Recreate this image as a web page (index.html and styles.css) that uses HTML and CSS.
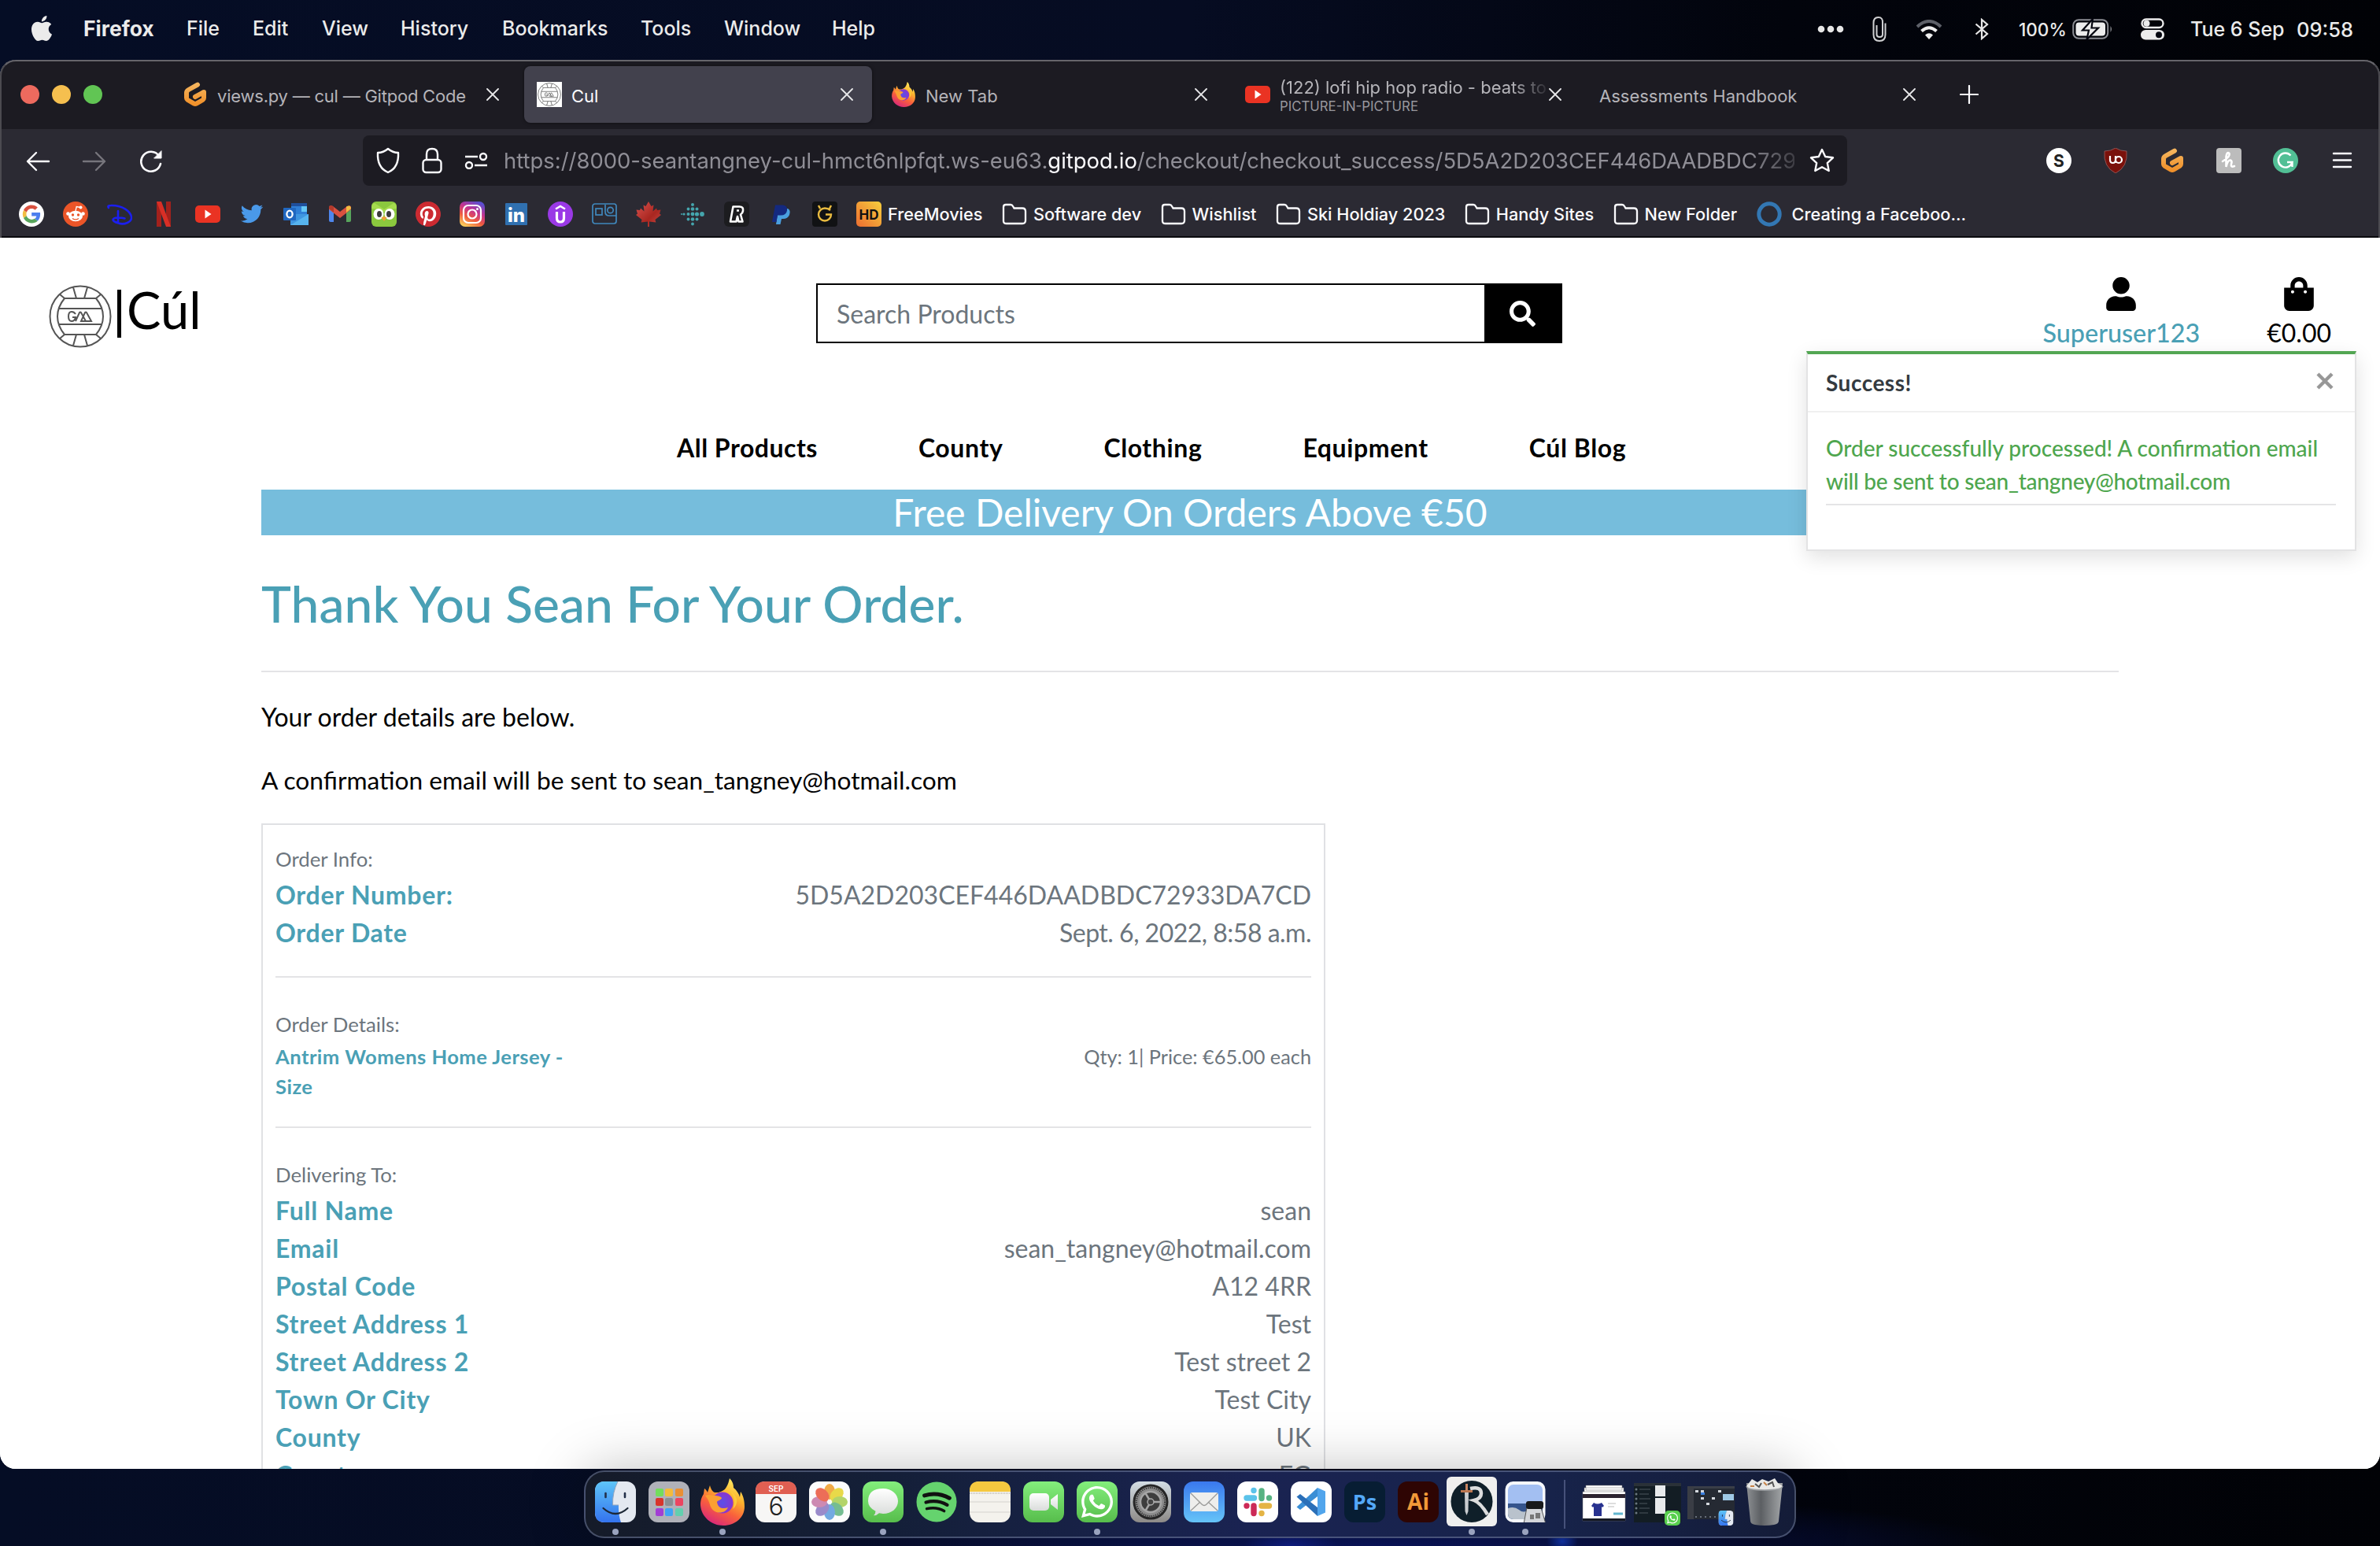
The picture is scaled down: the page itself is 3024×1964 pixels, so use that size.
FILE: index.html
```html
<!DOCTYPE html>
<html lang="en">
<head>
<meta charset="utf-8">
<title>Cul</title>
<link rel="stylesheet" href="styles.css">
</head>
<body>
<svg class="defs" aria-hidden="true">
  <defs>
    <linearGradient id="gOrange" x1="0" y1="0" x2="0" y2="1"><stop offset="0" stop-color="#f5b45c"/><stop offset="1" stop-color="#f0912b"/></linearGradient>
    <linearGradient id="gFlame" x1=".8" y1="0" x2=".3" y2="1"><stop offset="0" stop-color="#fff36b"/><stop offset=".35" stop-color="#fdb32d"/><stop offset=".65" stop-color="#f9603c"/><stop offset="1" stop-color="#d8267c"/></linearGradient>
    <radialGradient id="gGlobe"><stop offset="0" stop-color="#5a50e8"/><stop offset="1" stop-color="#8a35cf"/></radialGradient>
    <linearGradient id="gInsta" x1=".2" y1="1" x2=".7" y2="0"><stop offset="0" stop-color="#fbd45c"/><stop offset=".35" stop-color="#ee5a3e"/><stop offset=".65" stop-color="#c5338f"/><stop offset="1" stop-color="#5b4ed1"/></linearGradient>
    <linearGradient id="gLeaf" x1="0" y1="0" x2="1" y2="1"><stop offset="0" stop-color="#d9534f"/><stop offset=".6" stop-color="#a92620"/><stop offset="1" stop-color="#c74a45"/></linearGradient>
    <linearGradient id="gHd" x1="1" y1="0" x2="0" y2="1"><stop offset="0" stop-color="#f7cf3d"/><stop offset="1" stop-color="#ec6d31"/></linearGradient>
    <linearGradient id="gGreen" x1="0" y1="0" x2="0" y2="1"><stop offset="0" stop-color="#83ee7c"/><stop offset="1" stop-color="#57bd4c"/></linearGradient>
    <linearGradient id="gBlue" x1="0" y1="0" x2="0" y2="1"><stop offset="0" stop-color="#5ec5f8"/><stop offset="1" stop-color="#3473ee"/></linearGradient>
    <linearGradient id="gMail" x1="0" y1="0" x2="0" y2="1"><stop offset="0" stop-color="#3a78ee"/><stop offset="1" stop-color="#66c4f8"/></linearGradient>
    <linearGradient id="gGrey" x1="0" y1="0" x2="0" y2="1"><stop offset="0" stop-color="#d3dde4"/><stop offset="1" stop-color="#8d8a87"/></linearGradient>
    <linearGradient id="gWhite" x1="0" y1="0" x2="0" y2="1"><stop offset="0" stop-color="#fff"/><stop offset="1" stop-color="#d9dcda"/></linearGradient>
    <linearGradient id="gBin" x1="0" y1="0" x2="1" y2="0"><stop offset="0" stop-color="#8d9093"/><stop offset=".4" stop-color="#5c5f63"/><stop offset="1" stop-color="#a3a6a8"/></linearGradient>
    <symbol id="gitpod" viewBox="0 0 32 32"><path d="M19 3.600 L7.600 10 Q5 11.500 5 14 V20.500 Q5 22 6.500 23 L14.500 27.600 Q16 28.400 17.500 27.600 L25.500 23 Q27 22 27 20.500 V13 L16 19" fill="none" stroke="url(#gOrange)" stroke-width="6" stroke-linejoin="round" stroke-linecap="round"/></symbol>
    <symbol id="firefox" viewBox="0 0 56 60"><path d="M37 0c4 4 5 8 5 12 4 3 7 8 8 12l1-7c4 6 5 13 5 19 0 14-12 24-27 24S1 49 0 34c0-7 2-11 4-14l1-7c2 1 3 3 4 5l3-9c1 4 3 8 6 9h5c5-2 8-3 10-7 2-3 3-7 4-11z" fill="url(#gFlame)"/><circle cx="28" cy="31" r="13.500" fill="url(#gGlobe)"/><path d="M6 22c5-2 9 0 12 0 4 0 8 1 9 3-1 3-5 3-6 5 1 9 9 9 14 7-4 9-17 8-21 1-3-5-2-9-8-16z" fill="#fba032"/><path d="M36 15c8 6 8 18 5 24 4-3 6-8 5-13-2-6-6-9-10-11z" fill="#fdc93b"/></symbol>
    <symbol id="youtube" viewBox="0 0 32 32"><rect y="5" width="32" height="22" rx="5" fill="#ea3323"/><path d="M12.500 10.500v11l8-5.500z" fill="#fff"/></symbol>
    <symbol id="close" viewBox="0 0 16 16"><path d="M1 1l14 14M15 1L1 15" stroke="#e8e8ea" stroke-width="1.800" stroke-linecap="round"/></symbol>
    <symbol id="folder" viewBox="0 0 32 32"><path d="M2 25V7q0-3 3-3h6q2 0 3 2l1.500 2.500H26q4 0 4 4V24q0 4-4 4H6q-4 0-4-3z" fill="none" stroke="#fbfbfe" stroke-width="2.300"/></symbol>
    <symbol id="ball" viewBox="0 0 80 80"><g fill="none" stroke="#555" stroke-width="2"><circle cx="40" cy="40" r="38.500"/><path d="M20 17h40Q69 28 69 40T60 63H20Q11 52 11 40T20 17zM13 30h54M13 50h54M20 17L14 12M35 17L31 3M45 17L49 3M60 17l6-5M20 63l-6 5M35 63l-4 14M45 63l4 14M60 63l6 5"/></g><path d="M34 37q-2-3-5-3-4 0-4 6t4 6q4 0 5-5h-4M34 46l5-11q1-1 2 0l6 11h-6l5-11q1-1 2 0l6 11h-9" fill="none" stroke="#555" stroke-width="2"/></symbol>
    <symbol id="whatsapp" viewBox="0 0 448 512"><path d="M380.900 97.100C339 55.100 283.200 32 223.900 32c-122.400 0-222 99.600-222 222 0 39.100 10.200 77.300 29.600 111L0 480l117.700-30.900c32.400 17.700 68.900 27 106.100 27h.1c122.300 0 224.100-99.600 224.100-222 0-59.300-25.200-115-67.100-157zm-157 341.600c-33.200 0-65.700-8.900-94-25.700l-6.700-4-69.800 18.300L72 359.200l-4.400-7c-18.500-29.400-28.200-63.300-28.200-98.200 0-101.700 82.800-184.500 184.600-184.500 49.300 0 95.600 19.200 130.400 54.100 34.800 34.900 56.200 81.200 56.100 130.500 0 101.800-84.900 184.600-186.600 184.600zm101.200-138.200c-5.500-2.800-32.800-16.200-37.900-18-5.100-1.900-8.800-2.800-12.500 2.800-3.700 5.600-14.300 18-17.600 21.800-3.200 3.700-6.500 4.200-12 1.400-32.600-16.300-54-29.100-75.500-66-5.700-9.800 5.700-9.100 16.300-30.300 1.800-3.700.9-6.900-.5-9.700-1.400-2.800-12.500-30.100-17.100-41.200-4.500-10.800-9.100-9.300-12.500-9.500-3.200-.2-6.900-.2-10.600-.2-3.700 0-9.700 1.400-14.800 6.900-5.100 5.600-19.400 19-19.400 46.300 0 27.300 19.900 53.700 22.600 57.400 2.800 3.700 39.100 59.700 94.800 83.800 35.200 15.200 49 16.500 66.600 13.900 10.700-1.600 32.800-13.400 37.400-26.400 4.600-13 4.600-24.100 3.200-26.400-1.300-2.500-5-3.900-10.500-6.600z" fill="#fff"/></symbol>
    <symbol id="finder" viewBox="0 0 52 52"><rect width="52" height="52" rx="12" fill="#e4e9f1"/><path d="M12 0H29Q22 14 22.500 30H30Q29.500 42 33 52H12Q0 52 0 40V12Q0 0 12 0z" fill="url(#gBlue)"/><path d="M29 0Q22 14 22.500 30H30" fill="none" stroke="#93a5bd" stroke-width="1"/><path d="M13.500 15v5M38 15v5" stroke="#22304a" stroke-width="2.600" stroke-linecap="round"/><path d="M10.500 34Q26 48 41.500 34" fill="none" stroke="#1d2836" stroke-width="2.200" stroke-linecap="round"/></symbol>
  </defs>
</svg>

<header class="menubar">
  <svg class="apple" viewBox="2 0 20 24"><path fill="#ebebeb" d="M12.152 6.896c-.948 0-2.415-1.078-3.960-1.040-2.040.027-3.910 1.183-4.961 3.014-2.117 3.675-.546 9.103 1.519 12.090 1.013 1.454 2.208 3.090 3.792 3.039 1.520-.065 2.090-.987 3.935-.987 1.831 0 2.350.987 3.960.948 1.637-.026 2.676-1.480 3.676-2.948 1.156-1.688 1.636-3.325 1.662-3.415-.039-.013-3.182-1.221-3.220-4.857-.026-3.040 2.480-4.494 2.597-4.559-1.429-2.090-3.623-2.324-4.390-2.376-2-.156-3.675 1.090-4.610 1.090zM15.530 3.830c.843-1.012 1.400-2.427 1.245-3.830-1.207.052-2.662.805-3.532 1.818-.78.896-1.454 2.338-1.273 3.714 1.338.104 2.715-.688 3.559-1.701"/></svg>
  <nav class="menus"><b>Firefox</b><span>File</span><span>Edit</span><span>View</span><span>History</span><span>Bookmarks</span><span>Tools</span><span>Window</span><span>Help</span></nav>
  <div class="status">
    <svg width="34" height="10" viewBox="0 0 34 10" fill="#e6e6e6"><circle cx="5" cy="5" r="4.300"/><circle cx="17" cy="5" r="4.300"/><circle cx="29" cy="5" r="4.300"/></svg>
    <svg width="18" height="32" viewBox="0 0 18 32"><path d="M1.500 10v13q0 8 7.500 8t7.500-8V8.500M1.500 12V8Q1.500 1 7.500 1T13 8v15q0 3-3.700 3T5.500 23V11" fill="none" stroke="#cfd0d2" stroke-width="2"/></svg>
    <svg width="34" height="25" viewBox="0 0 34 25" fill="none" stroke-width="4"><path d="M2 9Q17-5 32 9" stroke="#5d6068"/><path d="M7.500 14.500Q17 6 26.500 14.500" stroke="#eee"/><path d="M12 19.500Q17 15 22 19.500L17 25z" fill="#eee"/></svg>
    <svg width="18" height="28" viewBox="0 0 18 28"><path d="M1.500 7.500L16 20 9 26V2l7 6L1.500 20.500" fill="none" stroke="#e8e8e8" stroke-width="2.200"/></svg>
    <span class="pct">100%</span>
    <svg width="52" height="26" viewBox="0 0 52 26"><rect x="1.200" y="1.200" width="44" height="23.600" rx="7" fill="none" stroke="#8a8c92" stroke-width="2"/><rect x="4.500" y="4.500" width="37.500" height="17" rx="4" fill="#ececec"/><path d="M48.500 9q3 4 0 8z" fill="#8a8c92"/><path d="M26 0L13 14.500h8L18.500 26 33 11.500h-8.500z" fill="#ececec" stroke="#04060f" stroke-width="2.200"/></svg>
    <svg width="30" height="28" viewBox="0 0 30 28"><rect x="1.500" y="1.500" width="27" height="10.500" rx="5.200" fill="none" stroke="#ececec" stroke-width="2.400"/><circle cx="7.500" cy="6.700" r="4" fill="#ececec"/><rect x="0" y="15" width="30" height="12.500" rx="6.200" fill="#ececec"/><circle cx="23" cy="21.200" r="4" fill="#04060f"/></svg>
    <span class="date">Tue 6 Sep</span><span class="time">09:58</span>
  </div>
</header>

<main class="window">
  <div class="tabstrip">
    <div class="lights"><i class="red"></i><i class="amber"></i><i class="green"></i></div>
    <div class="tab"><svg class="fav"><use href="#gitpod"/></svg><span class="label snug">views.py — cul — Gitpod Code</span><svg class="x"><use href="#close"/></svg></div>
    <div class="tab active"><span class="fav white"><svg width="30" height="30"><use href="#ball"/></svg></span><span class="label">Cul</span><svg class="x"><use href="#close"/></svg></div>
    <div class="tab"><svg class="fav"><use href="#firefox"/></svg><span class="label">New Tab</span><svg class="x"><use href="#close"/></svg></div>
    <div class="tab"><svg class="fav"><use href="#youtube"/></svg><span class="label two"><span class="fade">(122) lofi hip hop radio - beats to</span><small>PICTURE-IN-PICTURE</small></span><svg class="x"><use href="#close"/></svg></div>
    <div class="tab"><span class="label">Assessments Handbook</span><svg class="x"><use href="#close"/></svg></div>
    <svg class="plus" viewBox="0 0 24 24"><path d="M12 1v22M1 12h22" stroke="#fbfbfe" stroke-width="2.200" stroke-linecap="round"/></svg>
  </div>

  <div class="toolbar">
    <div class="nav-buttons">
      <svg width="32" height="28" viewBox="0 0 32 28" fill="none" stroke="#fbfbfe" stroke-width="2.400" stroke-linecap="round" stroke-linejoin="round"><path d="M30 14H3M14 3L3 14l11 11"/></svg>
      <svg width="32" height="28" viewBox="0 0 32 28" fill="none" stroke="#76757c" stroke-width="2.400" stroke-linecap="round" stroke-linejoin="round"><path d="M2 14h27M18 3l11 11-11 11"/></svg>
      <svg width="32" height="30" viewBox="0 0 32 30" fill="none" stroke="#fbfbfe" stroke-width="2.600" stroke-linecap="round"><path d="M28 18A12.500 12.500 0 1 1 26 8"/><path d="M29 2v9h-9z" fill="#fbfbfe" stroke-width="1"/></svg>
    </div>
    <div class="urlbar">
      <svg width="32" height="34" viewBox="0 0 32 34" fill="none" stroke="#fbfbfe" stroke-width="2.400" stroke-linejoin="round"><path d="M16 2q6 5 13 5 1 19-13 25Q2 26 3 7q7 0 13-5z"/></svg>
      <svg width="26" height="34" viewBox="0 0 26 34" fill="none" stroke="#fbfbfe" stroke-width="2.400"><rect x="1.500" y="16" width="23" height="16" rx="4"/><path d="M6 16V9q0-7 7-7t7 7v7"/></svg>
      <svg width="30" height="22" viewBox="0 0 30 22" fill="none" stroke="#fbfbfe" stroke-width="2.400"><path d="M1 6h16M13 17h16"/><circle cx="24" cy="6" r="4"/><circle cx="6" cy="17" r="4"/></svg>
      <span class="url">https://8000-seantangney-cul-hmct6nlpfqt.ws-eu63.<b>gitpod.io</b>/checkout/checkout_success/5D5A2D203CEF446DAADBDC729</span>
      <svg class="star" width="32" height="32" viewBox="0 0 32 32"><path d="M16 2l4.200 9 9.800 1.300-7.200 6.800 1.900 9.900L16 24.200 7.300 29l1.900-9.900L2 12.300 11.800 11z" fill="none" stroke="#fbfbfe" stroke-width="2.400" stroke-linejoin="round"/></svg>
    </div>
    <div class="extensions">
      <svg viewBox="0 0 32 32"><circle cx="16" cy="16" r="16" fill="#fff"/><text x="16" y="23.500" text-anchor="middle" font-family="Inter" font-weight="700" font-size="21" fill="#222">S</text></svg>
      <svg viewBox="0 0 32 32"><path d="M16 0q6 4 14 4 2 20-14 28Q0 24 2 4q8 0 14-4z" fill="#7a110b" stroke="#9b6262" stroke-width=".8"/><path d="M9 10v5q0 4 3.500 4t3.500-4v-5M16 10v9M16 15a4 4 0 1 0 8 0 4 4 0 1 0-8 0" fill="none" stroke="#fff" stroke-width="2.200"/></svg>
      <svg><use href="#gitpod"/></svg>
      <svg viewBox="0 0 32 32"><rect width="32" height="32" rx="4" fill="#bcbcbc"/><path d="M8 17Q18 11 16.500 7q-3-3-4 4v13q2-9 5.500-8.500 2.500 1 1 5-1 4.500 4 2.500" fill="none" stroke="#fff" stroke-width="2.600" stroke-linecap="round"/></svg>
      <svg viewBox="0 0 32 32"><circle cx="16" cy="16" r="16" fill="#52bf95"/><path d="M22.500 9.500A9 9 0 1 0 24.500 18H18M24.500 18v6" fill="none" stroke="#fff" stroke-width="2.400"/></svg>
      <svg viewBox="0 0 32 32"><path d="M5 7h22M5 15.500h22M5 24h22" stroke="#fbfbfe" stroke-width="2.400" stroke-linecap="round"/></svg>
    </div>
  </div>

  <div class="bookmarks">
    <svg viewBox="0 0 32 32"><circle cx="16" cy="16" r="16" fill="#fff"/><g transform="translate(4.800 4.600) scale(.475)"><path fill="#d95140" d="M24 9.500c3.540 0 6.710 1.220 9.210 3.600l6.850-6.850C35.900 2.380 30.470 0 24 0 14.620 0 6.510 5.380 2.560 13.220l7.980 6.190C12.430 13.720 17.740 9.500 24 9.500z"/><path fill="#4c7fee" d="M46.980 24.550c0-1.570-.15-3.090-.38-4.550H24v9.020h12.940c-.58 2.960-2.260 5.480-4.780 7.180l7.730 6c4.510-4.180 7.090-10.360 7.090-17.650z"/><path fill="#f2bd42" d="M10.530 28.590c-.48-1.450-.76-2.990-.76-4.590s.27-3.140.76-4.590l-7.980-6.190C.92 16.460 0 20.120 0 24c0 3.880.92 7.540 2.560 10.780l7.970-6.190z"/><path fill="#58a55c" d="M24 48c6.480 0 11.930-2.130 15.890-5.810l-7.730-6c-2.150 1.450-4.920 2.300-8.160 2.300-6.260 0-11.570-4.220-13.470-9.910l-7.980 6.190C6.510 42.620 14.620 48 24 48z"/></g></svg>
    <svg viewBox="0 0 32 32"><circle cx="16" cy="16" r="16" fill="#eb5528"/><g fill="#fff"><ellipse cx="16" cy="18.500" rx="9" ry="6.800"/><circle cx="6.500" cy="15.500" r="2.300"/><circle cx="25.500" cy="15.500" r="2.300"/><circle cx="22.500" cy="7.500" r="2"/></g><path d="M16 12l1.200-5.500 5 1" fill="none" stroke="#fff" stroke-width="1.300"/><circle cx="12.500" cy="17" r="1.700" fill="#eb5528"/><circle cx="19.500" cy="17" r="1.700" fill="#eb5528"/><path d="M12 21.500q4 2.800 8 0" fill="none" stroke="#eb5528" stroke-width="1.300"/></svg>
    <svg viewBox="0 0 32 32"><path d="M2 8Q0 5 5 5C20 4.500 30 13 31 20c.5 6-9 10-16.500 7.500-4-1-7-3-7-4.500 1-3 9-3 15-1.500M14 12v15" fill="none" stroke="#1b1ff0" stroke-width="2.600" stroke-linecap="round"/></svg>
    <svg viewBox="0 0 32 32"><path d="M7 0h6v32H7z" fill="#a3211c"/><path d="M19 0h6v32h-6z" fill="#a3211c"/><path d="M7 0h6l12 32h-6z" fill="#d92f26"/></svg>
    <svg><use href="#youtube"/></svg>
    <svg viewBox="-1.500 -1.200 27 27"><path fill="#4a99e9" d="M23.953 4.570a10 10 0 01-2.825.775 4.958 4.958 0 002.163-2.723c-.951.555-2.005.959-3.127 1.184a4.920 4.920 0 00-8.384 4.482C7.690 8.095 4.067 6.130 1.640 3.162a4.822 4.822 0 00-.666 2.475c0 1.710.87 3.213 2.188 4.096a4.904 4.904 0 01-2.228-.616v.06a4.923 4.923 0 003.946 4.827 4.996 4.996 0 01-2.212.085 4.936 4.936 0 004.604 3.417 9.867 9.867 0 01-6.102 2.105c-.39 0-.779-.023-1.170-.067a13.995 13.995 0 007.557 2.209c9.053 0 13.998-7.496 13.998-13.985 0-.21 0-.42-.015-.63A9.935 9.935 0 0024 4.590z"/></svg>
    <svg viewBox="0 0 32 32"><path d="M10 2h20v15H10z" fill="#2f7fd6"/><path d="M10 2h20v4H10z" fill="#1f4f9c"/><path d="M23 6h7v7h-7z" fill="#65c7f5"/><path d="M9 16h23v14H9z" fill="#3f96e0"/><path d="M9 30L32 16v14z" fill="#57b4ee"/><rect y="8" width="16" height="16" rx="1" fill="#2067c0"/><ellipse cx="8" cy="16" rx="3.600" ry="4.400" fill="none" stroke="#fff" stroke-width="2.300"/></svg>
    <svg viewBox="0 0 32 32"><path d="M2 8h6v18H4q-2 0-2-2z" fill="#4f86ec"/><path d="M24 8h6v16q0 2-2 2h-4z" fill="#58a55c"/><path d="M2 8q0-4 5-2l9 7 9-7q5-2 5 2v2l-14 11L2 10z" fill="#d95140"/><path d="M24 6.500q6-3 6 2.500l-6 5z" fill="#f2bd42"/><path d="M2 8q0-5 6-1.500V14l-6-5z" fill="#b33a2c"/></svg>
    <svg viewBox="0 0 32 32"><rect width="32" height="32" rx="6" fill="#8bc83e"/><path d="M0 9Q0 2 4 2l12 8L28 2q4 0 4 7l-9 1-7 3-7-3z" fill="#a5db4e"/><ellipse cx="9" cy="16" rx="6.500" ry="7" fill="#fff"/><ellipse cx="23" cy="16" rx="6.500" ry="7" fill="#fff"/><ellipse cx="10" cy="16" rx="3" ry="4" fill="#3c3c3c"/><ellipse cx="22" cy="16" rx="3" ry="4" fill="#3c3c3c"/><path d="M12.500 20.500q3.500-3 7 0L16 25z" fill="#efa037"/></svg>
    <svg viewBox="0 0 24 24"><circle cx="12" cy="12" r="11.500" fill="#fff"/><path fill="#cc2a31" d="M12.017 0C5.396 0 .029 5.367.029 11.987c0 5.079 3.158 9.417 7.618 11.162-.105-.949-.199-2.403.041-3.439.219-.937 1.406-5.957 1.406-5.957s-.359-.72-.359-1.781c0-1.663.967-2.911 2.168-2.911 1.024 0 1.518.769 1.518 1.688 0 1.029-.653 2.567-.992 3.992-.285 1.193.6 2.165 1.775 2.165 2.128 0 3.768-2.245 3.768-5.487 0-2.861-2.063-4.869-5.008-4.869-3.410 0-5.409 2.562-5.409 5.199 0 1.033.394 2.143.889 2.741.099.12.112.225.085.345-.09.375-.293 1.199-.334 1.363-.053.225-.172.271-.401.165-1.495-.69-2.433-2.878-2.433-4.646 0-3.776 2.748-7.252 7.920-7.252 4.158 0 7.392 2.967 7.392 6.923 0 4.135-2.607 7.462-6.233 7.462-1.214 0-2.354-.629-2.758-1.379l-.749 2.848c-.269 1.045-1.004 2.352-1.498 3.146 1.123.345 2.306.535 3.550.535 6.607 0 11.985-5.365 11.985-11.987C23.970 5.390 18.592.026 11.985.026L12.017 0z"/></svg>
    <svg viewBox="0 0 32 32"><rect width="32" height="32" rx="7" fill="url(#gInsta)"/><g fill="none" stroke="#fff" stroke-width="2.200"><rect x="5" y="5" width="22" height="22" rx="6"/><circle cx="16" cy="16" r="5.500"/></g><circle cx="22.500" cy="9.500" r="1.500" fill="#fff"/></svg>
    <svg viewBox="0 0 32 32"><rect x="2" y="2" width="28" height="28" rx="1" fill="#3070b0"/><text x="16" y="26" text-anchor="middle" font-family="Inter" font-weight="800" font-size="24" fill="#fff">in</text></svg>
    <svg viewBox="0 0 32 32"><circle cx="16" cy="16" r="16" fill="#9a39e6"/><path d="M11.500 13v8q0 5 4.500 5t4.500-5v-8" fill="none" stroke="#fff" stroke-width="3.200"/><path d="M10 9.500l6-3.500 6 3.500" fill="none" stroke="#fff" stroke-width="2.500"/></svg>
    <svg viewBox="0 0 32 32" fill="none" stroke="#4088bd" stroke-width="1.700"><rect x="1" y="3" width="30" height="25" rx="3"/><path d="M17 4v9q0 5 5 5h9"/><rect x="5" y="9" width="8" height="8"/><circle cx="23.500" cy="11" r="3.700"/></svg>
    <svg viewBox="0 0 32 32"><path d="M16 0l3.500 6 3-1.500-1 8 4.500-4 1 2.500 4.500-.5-1.500 5 2 1.500-7.500 6 .8 3.500-8.300-1V32h-2v-6.500l-8.300 1 .8-3.500L0 17l2-1.500-1.500-5 4.500.5 1-2.500 4.500 4-1-8 3 1.500z" fill="url(#gLeaf)"/></svg>
    <svg viewBox="0 0 32 32" fill="#45a5ad"><circle cx="16" cy="4" r="2"/><circle cx="10.500" cy="9.500" r="1.900"/><circle cx="16" cy="9.500" r="2.300"/><circle cx="21.500" cy="9.500" r="2"/><circle cx="5" cy="16" r="1.600"/><circle cx="10.500" cy="16" r="2"/><circle cx="16" cy="16" r="2.400"/><circle cx="21.500" cy="16" r="2.600"/><circle cx="28" cy="16" r="2.900"/><circle cx="10.500" cy="22.500" r="1.900"/><circle cx="16" cy="22.500" r="2.300"/><circle cx="21.500" cy="22.500" r="2"/><circle cx="16" cy="28.500" r="1.900"/><circle cx="2" cy="16" r="1"/></svg>
    <svg viewBox="0 0 32 32"><rect width="32" height="32" rx="6" fill="#1c1c1f"/><path d="M11.500 6.500h8q5.500 0 4.500 5.500-.5 3-3 4.500l2.500 9h-5l-1.500-6.500-1.500 6.500H8z" fill="#1c1c1f" stroke="#fff" stroke-width="2.600" stroke-linejoin="round"/><path d="M16 11.500h3" stroke="#fff" stroke-width="2.500"/></svg>
    <svg viewBox="0 0 32 32"><path d="M13 9h12q4 2 2 8-2 5-8 5h-2l-1.500 7H10z" fill="#4a9fdf"/><path d="M9 4.500h10q6 1 5 7-1 6-8 6h-4l-1.500 8.500H5z" fill="#14297f"/></svg>
    <svg viewBox="0 0 32 32"><rect width="32" height="32" rx="4" fill="#111214"/><path d="M23 11Q20 8.500 16 8.500a8 8 0 1 0 8 8h-7M10 9L8 5M22 9l2-4" fill="none" stroke="#e9bb40" stroke-width="2.400"/></svg>
    <a class="bm hd"><svg viewBox="0 0 32 32"><rect width="32" height="32" rx="5" fill="url(#gHd)"/><text x="16" y="22.500" text-anchor="middle" font-family="Inter" font-weight="700" font-size="17" fill="#111">HD</text></svg>FreeMovies</a>
    <a class="bm"><svg><use href="#folder"/></svg>Software dev</a>
    <a class="bm"><svg><use href="#folder"/></svg>Wishlist</a>
    <a class="bm"><svg><use href="#folder"/></svg>Ski Holdiay 2023</a>
    <a class="bm"><svg><use href="#folder"/></svg>Handy Sites</a>
    <a class="bm"><svg><use href="#folder"/></svg>New Folder</a>
    <a class="bm fb"><svg viewBox="0 0 32 32"><circle cx="16" cy="16" r="13.200" fill="none" stroke="#3377b3" stroke-width="5"/></svg>Creating a Faceboo...</a>
  </div>

  <section class="page">
    <div class="top">
      <a class="brand"><svg class="crest"><use href="#ball"/></svg><i class="bar"></i><span>Cúl</span></a>
      <form class="search"><span class="field">Search Products</span><span class="go"><svg width="33" height="33" viewBox="0 0 512 512"><path fill="#fff" d="M505 442.700L405.300 343c-4.500-4.500-10.600-7-17-7H372c27.600-35.300 44-79.700 44-128C416 93.100 322.900 0 208 0S0 93.100 0 208s93.100 208 208 208c48.300 0 92.700-16.400 128-44v16.300c0 6.400 2.500 12.500 7 17l99.700 99.700c9.400 9.400 24.600 9.400 33.900 0l28.300-28.300c9.400-9.400 9.400-24.600.1-34zM208 336c-70.700 0-128-57.200-128-128 0-70.700 57.200-128 128-128 70.700 0 128 57.200 128 128 0 70.700-57.200 128-128 128z"/></svg></span></form>
      <div class="account">
        <a class="user"><svg width="38" height="43" viewBox="0 0 448 512"><path d="M224 256c70.700 0 128-57.300 128-128S294.700 0 224 0 96 57.300 96 128s57.300 128 128 128zm89.600 32h-16.700c-22.200 10.200-46.900 16-72.900 16s-50.600-5.800-72.900-16h-16.700C60.200 288 0 348.200 0 422.400V464c0 26.500 21.500 48 48 48h352c26.500 0 48-21.500 48-48v-41.600c0-74.200-60.200-134.400-134.400-134.400z"/></svg><span>Superuser123</span></a>
        <a><svg width="38" height="43" viewBox="0 0 448 512"><path d="M352 160v-32C352 57.420 294.579 0 224 0 153.420 0 96 57.420 96 128v32H0v272c0 44.183 35.817 80 80 80h288c44.183 0 80-35.817 80-80V160h-96zm-192-32c0-35.290 28.710-64 64-64s64 28.710 64 64v32H160v-32zm160 120c-13.255 0-24-10.745-24-24s10.745-24 24-24 24 10.745 24 24-10.745 24-24 24zm-192 0c-13.255 0-24-10.745-24-24s10.745-24 24-24 24 10.745 24 24-10.745 24-24 24z"/></svg><span>€0.00</span></a>
      </div>
    </div>
    <nav class="shop-nav"><a>All Products</a><a>County</a><a>Clothing</a><a>Equipment</a><a>Cúl Blog</a></nav>
    <div class="content">
      <div class="banner">Free Delivery On Orders Above €50</div>
      <h1>Thank You Sean For Your Order.</h1>
      <hr>
      <p>Your order details are below.</p>
      <p class="tight">A confirmation email will be sent to sean_tangney@hotmail.com</p>
      <div class="order">
        <small>Order Info:</small>
        <div class="row"><b>Order Number:</b><span>5D5A2D203CEF446DAADBDC72933DA7CD</span></div>
        <div class="row"><b>Order Date</b><span class="when">Sept. 6, 2022, 8:58 a.m.</span></div>
        <hr>
        <small>Order Details:</small>
        <div class="row item"><b>Antrim Womens Home Jersey - Size</b><span>Qty: 1| Price: €65.00 each</span></div>
        <hr>
        <small>Delivering To:</small>
        <div class="row"><b>Full Name</b><span>sean</span></div>
        <div class="row"><b>Email</b><span>sean_tangney@hotmail.com</span></div>
        <div class="row"><b>Postal Code</b><span>A12 4RR</span></div>
        <div class="row"><b>Street Address 1</b><span>Test</span></div>
        <div class="row"><b>Street Address 2</b><span>Test street 2</span></div>
        <div class="row"><b>Town Or City</b><span>Test City</span></div>
        <div class="row"><b>County</b><span>UK</span></div>
        <div class="row"><b>Country</b><span>EG</span></div>
      </div>
    </div>
    <aside class="toast">
      <div class="toast-head"><b>Success!</b><svg width="24" height="24" viewBox="0 0 24 24"><path d="M3 3l18 18M21 3L3 21" stroke="#979797" stroke-width="4.400"/></svg></div>
      <div class="toast-body"><p>Order successfully processed! A confirmation email <span>will be sent to sean_tangney@hotmail.com</span></p><hr></div>
    </aside>
  </section>
</main>

<footer class="dock">
  <div class="app on"><svg><use href="#finder"/></svg></div>
  <div class="app"><svg viewBox="0 0 52 52"><rect width="52" height="52" rx="12" fill="#b0b1b9"/><g><rect x="9" y="9" width="10" height="10" rx="2" fill="#72dd5c"/><rect x="21" y="9" width="10" height="10" rx="2" fill="#f3bb3c"/><rect x="34" y="9" width="10" height="10" rx="2" fill="#ea8f34"/><rect x="9" y="21" width="10" height="10" rx="2" fill="#d8342b"/><rect x="21" y="21" width="10" height="10" rx="2" fill="#8a8e93"/><rect x="34" y="21" width="10" height="10" rx="2" fill="#ec4560"/><rect x="9" y="34" width="10" height="10" rx="2" fill="#a23ed4"/><rect x="21" y="34" width="10" height="10" rx="2" fill="#3fa3f5"/><rect x="34" y="34" width="10" height="10" rx="2" fill="#63cfae"/></g></svg></div>
  <div class="app on fox"><svg><use href="#firefox"/></svg></div>
  <div class="app"><svg viewBox="0 0 52 52"><rect width="52" height="52" rx="12" fill="#f7f6f5"/><path d="M0 16v-4Q0 0 12 0h28q12 0 12 12v4z" fill="#e05f52"/><text x="26" y="12.500" text-anchor="middle" font-family="Inter" font-weight="600" font-size="10" fill="#fff">SEP</text><text x="26" y="43" text-anchor="middle" font-family="Inter" font-weight="300" font-size="32" fill="#222">6</text></svg></div>
  <div class="app"><svg viewBox="0 0 52 52"><rect width="52" height="52" rx="12" fill="#fcfcfc"/><g transform="translate(26 26)" opacity=".88"><ellipse cy="-13" rx="7" ry="10" fill="#f0a030"/><ellipse cy="-13" rx="7" ry="10" fill="#e6d531" transform="rotate(45)"/><ellipse cy="-13" rx="7" ry="10" fill="#a9cf55" transform="rotate(90)"/><ellipse cy="-13" rx="7" ry="10" fill="#63b583" transform="rotate(135)"/><ellipse cy="-13" rx="7" ry="10" fill="#5f9ede" transform="rotate(180)"/><ellipse cy="-13" rx="7" ry="10" fill="#8d7cc4" transform="rotate(225)"/><ellipse cy="-13" rx="7" ry="10" fill="#c77ba8" transform="rotate(270)"/><ellipse cy="-13" rx="7" ry="10" fill="#ea5a42" transform="rotate(315)"/></g></svg></div>
  <div class="app on"><svg viewBox="0 0 52 52"><rect width="52" height="52" rx="12" fill="url(#gGreen)"/><path d="M26 9c11 0 19 7 19 16s-8 16-19 16l-5-.7q-3 3-7 3 2.500-2.500 2.500-5.500Q7 33 7 25 7 9 26 9z" fill="url(#gWhite)"/></svg></div>
  <div class="app"><svg viewBox="-1 -1 54 54"><circle cx="26" cy="26" r="26.500" fill="#65d36e"/><g fill="none" stroke="#111" stroke-linecap="round"><path d="M10 17.500q17-5 33 3.500" stroke-width="5.200"/><path d="M12 26.500q15-4 28 3.500" stroke-width="4.400"/><path d="M13 35q13-3 23 3" stroke-width="3.600"/></g></svg></div>
  <div class="app"><svg viewBox="0 0 52 52"><rect width="52" height="52" rx="12" fill="#f4f2ed"/><path d="M0 13v-1Q0 0 12 0h28q12 0 12 12v1z" fill="#f5c83f"/><path d="M0 15h52" stroke="#c8c5be" stroke-width="2" stroke-dasharray="1 1"/><path d="M0 26h52M0 39h52" stroke="#d5d3ce"/></svg></div>
  <div class="app"><svg viewBox="0 0 52 52"><rect width="52" height="52" rx="12" fill="url(#gGreen)"/><rect x="8" y="15" width="25" height="22" rx="5" fill="url(#gWhite)"/><path d="M35 23l9-7v20l-9-7z" fill="url(#gWhite)"/></svg></div>
  <div class="app on"><svg viewBox="0 0 52 52"><rect width="52" height="52" rx="12" fill="url(#gGreen)"/><use href="#whatsapp" x="6" y="3" width="40" height="46"/></svg></div>
  <div class="app"><svg viewBox="0 0 52 52"><rect width="52" height="52" rx="12" fill="url(#gGrey)"/><circle cx="26" cy="26" r="21" fill="#8b8b8b" stroke="#262626" stroke-width="3"/><circle cx="26" cy="26" r="18" fill="none" stroke="#333" stroke-width="2" stroke-dasharray="1.300 1.300"/><circle cx="26" cy="26" r="13" fill="#3d3d3d" stroke="#a5a5a5" stroke-width="2.500"/><path d="M26 26h13M26 26l-6.500-11M26 26l-6.500 11" stroke="#a5a5a5" stroke-width="2.500"/><circle cx="26" cy="26" r="4" fill="#444" stroke="#aaa" stroke-width="1.500"/></svg></div>
  <div class="app"><svg viewBox="0 0 52 52"><rect width="52" height="52" rx="12" fill="url(#gMail)"/><rect x="8" y="14" width="36" height="24" rx="3" fill="#eeeeec"/><path d="M9 15l14 14q3 3 6 0l14-14M9 37l12-11M43 37L31 26" fill="none" stroke="#9a9a98" stroke-width="1.300"/></svg></div>
  <div class="app"><svg viewBox="0 0 52 52"><rect width="52" height="52" rx="12" fill="#fff"/><g fill="none" stroke-width="7.400" stroke-linecap="round"><path d="M21 11.500v.01M12 21h9.500" stroke="#5bc3ea"/><path d="M31 12v9.500M40.500 21v.01" stroke="#57b382"/><path d="M31 31h9.500M31 40.500v.01" stroke="#e4b445"/><path d="M21 31v9.500M12 31v.01" stroke="#cc2a57"/></g></svg></div>
  <div class="app"><svg viewBox="0 0 52 52"><rect width="52" height="52" rx="12" fill="#fff"/><path d="M34 8v11L12 36l-4.500-3.500z" fill="#3b8fd6"/><path d="M34 44V33L12 16l-4.500 3.500z" fill="#2a6fb8"/><path d="M34 8l10 4.500v27L34 44z" fill="#51a5ec"/></svg></div>
  <div class="app"><svg viewBox="0 0 52 52"><rect width="52" height="52" rx="12" fill="#071d33"/><text x="26" y="36" text-anchor="middle" font-family="Open Sans" font-weight="700" font-size="27" fill="#53a8f8">Ps</text></svg></div>
  <div class="app"><svg viewBox="0 0 52 52"><rect width="52" height="52" rx="12" fill="#2e0503"/><text x="26" y="36" text-anchor="middle" font-family="Open Sans" font-weight="700" font-size="28" fill="#f29a38">Ai</text></svg></div>
  <div class="app on big"><svg viewBox="0 0 64 64"><rect width="64" height="63" rx="6" fill="#efefee"/><circle cx="32" cy="31.500" r="26.500" fill="#0f1f29"/><path d="M30 15q14-3 14 6 0 7-9 9 8 3 17 18" fill="none" stroke="#dcdddd" stroke-width="4.500"/><path d="M23 18h5l-.5 26-2 5-2-5z" fill="#c9cccf"/><path d="M18 18.500h15" stroke="#bb7650" stroke-width="3"/><path d="M25.500 9v9" stroke="#c98561" stroke-width="3"/></svg></div>
  <div class="app on"><svg viewBox="0 0 52 52"><rect x=".5" width="51" height="52" rx="10" fill="#f6f8fb"/><rect x="4" y="4" width="44" height="44" rx="7" fill="#a3bff2"/><path d="M4 28h44v13q0 7-7 7H11q-7 0-7-7z" fill="#35548c"/><path d="M4 34q8-3 14 2t12 0v12H11q-7 0-7-7z" fill="#b9c2cc"/><path d="M27 28h22l-3 5 6 21H24l4-21z" fill="#d4d6da" stroke="#555" stroke-width="1"/><rect x="27" y="25" width="22" height="10" rx="3" fill="#18191b"/><path d="M32 42h5v6h-5zM39 40h6v7h-6z" fill="#777"/></svg></div>
  <i class="sep"></i>
  <div class="app mini"><svg viewBox="0 0 60 60"><g fill="#fff" stroke="#777" stroke-width=".5"><path d="M7 9h46v6H7zM5 12h50v6H5z"/><path d="M3 17h54v37H3z"/></g><path d="M3 20h54v5H3z" fill="#2c2430"/><path d="M3 51h54v3H3z" fill="#161a25"/><path d="M17 31q5 3 10 0l3 4-2 2-1-1v12H17V36l-1 1-2-2z" fill="#28328f"/><path d="M35 32h10M35 36h8" stroke="#bbb"/><path d="M42 45h12" stroke="#62b6cf" stroke-width="3"/></svg></div>
  <div class="app mini"><svg viewBox="0 0 60 60"><path d="M0 6h60v50H0z" fill="#131d24"/><path d="M0 6h60v4H0z" fill="#2a3138"/><g fill="#6b7880"><circle cx="3" cy="14" r="1.500"/><circle cx="3" cy="20" r="1.500"/><circle cx="3" cy="26" r="1.500"/><circle cx="3" cy="32" r="1.500"/><circle cx="3" cy="38" r="1.500"/><circle cx="3" cy="44" r="1.500"/></g><path d="M7 14h14M7 20h12M7 26h14M7 32h10M7 38h13M7 44h11" stroke="#4c565d"/><path d="M27 9h13v14H27zM27 25h13v20H27z" fill="#e8eaec"/><rect x="39" y="41" width="20" height="19" rx="5" fill="#58cf4e"/><use href="#whatsapp" x="41" y="42.500" width="16" height="16"/></svg></div>
  <div class="app mini"><svg viewBox="0 0 60 60"><path d="M0 10h60v42H0z" fill="#252a33"/><path d="M0 10h8v42H0z" fill="#3a3d45"/><path d="M8 10h52v3H8z" fill="#3a3e48"/><path d="M10 15h4v3h-4zM17 15h4v3h-4zM39 15h4v3h-4zM17 24h4v3h-4zM31 24h4v3h-4zM24 31h4v3h-4z" fill="#d4d8de"/><path d="M17 18h5v3h-5z" fill="#3a7fe0"/><path d="M45 20h14v8H45z" fill="#9fc9e6"/><path d="M10 49h26" stroke="#7f8793" stroke-dasharray="2 4" stroke-width="1.500"/><use href="#finder" x="39.500" y="41" width="19" height="19"/></svg></div>
  <div class="app mini"><svg viewBox="0 0 60 60"><path d="M7 6h46l-5 48q0 4-6 5-12 2-24 0-6-1-6-5z" fill="url(#gBin)"/><path d="M7 10L14 1l7 4 6-4 8 3 8-4 4 6 6 4q-2 5-23 5T7 10z" fill="#e9e9e7"/><path d="M18 7l5 4 3-5M34 8l6-3 2 6" fill="none" stroke="#555" stroke-width="2"/><path d="M29 5l4 4M12 10h5" stroke="#c78348" stroke-width="2"/><path d="M7 10q1 5 23 5t23-5" fill="none" stroke="#9fa2a5" stroke-width="1.500"/></svg></div>
</footer>
</body>
</html>
```
FILE: styles.css
```css
* { box-sizing: border-box; }
body {
  margin: 0; width: 3024px; height: 1964px; overflow: hidden;
  display: flex; flex-direction: column;
  font-family: Inter, "Liberation Sans", sans-serif;
  background:
    radial-gradient(60px 20px at 1640px 1964px, #10208a 0, transparent 100%),
    radial-gradient(20px 14px at 1985px 1958px, #1236b0 0, transparent 100%),
    radial-gradient(800px 70px at 1750px 1964px, #0b1660 0, transparent 100%),
    linear-gradient(90deg, #050d25 0, #060c22 50%, #02040c 75%, #010206 100%);
}
svg { display: block; flex: none; }
.defs { position: absolute; width: 0; height: 0; }

.menubar {
  height: 76px; flex: none; padding: 0 34px 0 39px;
  display: flex; align-items: center; color: #ebebeb; font-size: 25px; font-weight: 500;
}
.apple { width: 28px; height: 32px; margin-top: -4px; }
.menus {
  margin-left: 39px; line-height: 73px; height: 76px; white-space: nowrap;
  display: grid; grid-template-columns: 131px 84px 88px 100px 129px 176px 106px 137px 80px;
}
.menus b { font-size: 26.500px; }
.status { margin-left: auto; height: 76px; padding-bottom: 2px; display: flex; align-items: center; line-height: 73px; white-space: nowrap; }
.status svg:nth-child(2) { margin-left: 36px; }
.status svg:nth-child(3) { margin-left: 37px; }
.status svg:nth-child(4) { margin-left: 41px; }
.pct { margin-left: 38px; font-size: 22.500px; width: 68px; }
.status svg:nth-child(7) { margin-left: 35px; }
.date { margin-left: 33px; width: 135px; }
.time { width: 72px; font-size: 25.500px; }

.window {
  height: 1790px; flex: none; border-radius: 20px; overflow: hidden;
  display: flex; flex-direction: column; background: #fff;
  position: relative;
}
.window::after {
  content: ""; position: absolute; inset: 0 0 auto 0; height: 224px; pointer-events: none;
  border: 2px solid #66656b; border-bottom: 0; border-radius: 20px 20px 0 0;
  border-left-color: #4b4a50; border-right-color: #4b4a50;
}
.tabstrip { height: 88px; flex: none; background: #1c1b22; display: flex; padding: 8px 0 8px 26px; gap: 8px; align-items: center; }
.lights { display: flex; gap: 16px; width: 182px; }
.lights i { width: 24px; height: 24px; border-radius: 50%; }
.red { background: #ed6a5e; }
.amber { background: #f5bf4f; }
.green { background: #61c554; }
.tab { width: 442px; height: 72px; flex: none; border-radius: 8px; display: flex; align-items: center; padding: 0 24px 0 16px; gap: 12px; color: #b5b4b9; font-size: 22px; white-space: nowrap; }
.tab.active { background: #42414d; color: #fbfbfe; box-shadow: 0 0 4px rgba(0,0,0,.5); }
.fav { width: 32px; height: 32px; flex: none; }
.fav.white { background: #fff; display: grid; place-items: center; }
.label { flex: 1; padding-top: 3px; }
.snug { letter-spacing: -.22px; }
.two { display: flex; flex-direction: column; line-height: 27px; padding-top: 3px; margin-right: -12px; }
.two small { font-size: 16.800px; line-height: 20px; color: #98979d; }
.fade { -webkit-mask-image: linear-gradient(90deg, #000 295px, transparent 345px); mask-image: linear-gradient(90deg, #000 295px, transparent 345px); }
.x { width: 16px; height: 16px; }
.plus { width: 24px; height: 24px; margin-left: 24px; }

.toolbar { height: 80px; flex: none; background: #2b2a33; display: flex; align-items: center; padding: 0 32px; }
.nav-buttons { width: 429px; display: flex; gap: 40px; align-items: center; padding-top: 2px; }
.urlbar { width: 1886px; height: 64px; border-radius: 8px; background: #1c1b22; display: flex; align-items: center; padding: 0 16px 0 16px; }
.urlbar svg:nth-child(2) { margin-left: 27px; }
.urlbar svg:nth-child(3) { margin-left: 28px; }
.url { margin-left: 20px; width: 1640px; white-space: nowrap; font-size: 27.450px; line-height: 66px; color: #8f8e96; -webkit-mask-image: linear-gradient(90deg, #000 1580px, transparent 1665px); mask-image: linear-gradient(90deg, #000 1580px, transparent 1665px); }
.url b { font-weight: 400; color: #fbfbfe; }
.star { margin-left: auto; }
.extensions { margin-left: auto; display: flex; gap: 40px; }
.extensions svg { width: 32px; height: 32px; }

.bookmarks { height: 58px; flex: none; background: #2b2a33; border-bottom: 2px solid #0a0a0e; display: flex; align-items: center; gap: 24px; padding: 0 24px; color: #fbfbfe; font-size: 21.700px; font-weight: 500; white-space: nowrap; }
.bookmarks svg { width: 32px; height: 32px; }
.bm { display: flex; align-items: center; gap: 8px; margin-right: .4px; line-height: 34px; }
.bm.fb { gap: 13px; }

.page { flex: 1; position: relative; background: #fff; color: #000; font-family: Lato, "Liberation Sans", sans-serif; font-size: 32px; line-height: 48px; min-height: 0; }
.top { display: flex; justify-content: space-between; height: 196px; padding: 46px 62px 0 62px; }
.brand { display: flex; width: 974px; font-size: 65px; line-height: 80px; }
.crest { width: 80px; height: 80px; margin-top: 14px; }
.bar { width: 5px; height: 61px; margin: 20px 7px 0 7px; background: #000; }
.brand span { margin-top: 5px; }
.search { display: flex; width: 948px; height: 76px; margin-top: 12px; border: 2px solid #000; }
.field { flex: 1; padding-left: 24px; line-height: 74px; color: #6c757d; }
.go { width: 97px; background: #000; display: grid; place-items: center; }
.account { width: 976px; display: flex; justify-content: flex-end; gap: 85px; }
.account a { display: flex; flex-direction: column; align-items: center; }
.account svg { margin-top: 4px; }
.account span { line-height: 48px; margin-top: 4px; }
.user span { color: #4aa0b5; font-size: 32.300px; font-weight: 500; }

.shop-nav { display: flex; padding-left: 860px; gap: 128px; height: 124px; padding-top: 47px; font-weight: 700; letter-spacing: .6px; }
.shop-nav a:first-child { letter-spacing: .5px; }
.content { width: 2360px; margin: 0 auto; }
.banner { height: 58px; background: #76bddc; color: #fff; text-align: center; font-size: 48px; line-height: 58px; }
h1 { margin: 0; padding-top: 48px; height: 172px; font-size: 64px; line-height: 77px; font-weight: 500; letter-spacing: .1px; color: #4aa0b5; }
hr { border: 0; border-top: 2px solid #e4e4e6; margin: 0 0 32px; }
p { margin: 0 0 32px; padding-top: 1px; height: 48px; }
.tight { font-size: 31.700px; }
.order { width: 1352px; border: 2px solid #e0e1e4; padding: 17px 16px 16px; color: #6c757d; }
.order small { display: block; font-size: 25.800px; line-height: 48px; padding-top: 2px; height: 48px; }
.row { display: flex; justify-content: space-between; }
.row b { color: #4aa0b5; letter-spacing: .75px; }
.when { letter-spacing: -.5px; }
.order hr { margin: 31px 0 33px; }
.item { font-size: 25.300px; line-height: 38.400px; }
.item b { width: 404px; font-size: 25.600px; letter-spacing: .45px; }

.toast { position: absolute; left: 2295px; top: 144px; width: 699px; height: 254px; background: #fff; border: 2px solid #e3e3e4; border-top: 4px solid #53a653; box-shadow: 0 8px 24px rgba(0,0,0,.12); font-size: 28px; line-height: 42px; }
.toast-head { height: 74px; border-bottom: 2px solid #f0f0f0; padding: 0 26px 0 23px; display: flex; align-items: center; justify-content: space-between; color: #343a40; }
.toast-head b { letter-spacing: .5px; }
.toast-head svg { margin-top: -4px; }
.toast-body { padding: 24px 24px 0 23px; color: #4ea64e; font-weight: 500; }
.toast-body p { margin: 0; padding: 0; height: 84px; }
.toast-body span { letter-spacing: -.22px; }
.toast-body hr { margin: 8px 0 0; }

.dock { margin: 2px 0 0 742px; width: 1540px; height: 86px; flex: none; position: relative; border: 2px solid rgba(120,132,165,.5); border-radius: 26px; background: linear-gradient(90deg, #151b29 0, #141f38 25%, #1a2352 55%, #17234a 80%, #141c38 100%); box-shadow: 0 0 70px rgba(0,0,0,.26); display: flex; padding: 12px 0 0 12px; gap: 16px; }
.app { width: 52px; height: 52px; flex: none; position: relative; display: flex; justify-content: center; align-items: center; }
.app > svg { flex: none; width: 52px; height: 52px; }
.app.on::after { content: ""; position: absolute; left: 22px; top: 60px; width: 8px; height: 8px; border-radius: 50%; background: #9aa3be; }
.app.fox > svg { width: 56px; height: 60px; }
.app.big > svg { width: 64px; height: 64px; }
.app.mini > svg { width: 60px; height: 60px; }
.sep { width: 2px; height: 62px; margin: -2px 7px 0 7px; background: #46517a; }
```
